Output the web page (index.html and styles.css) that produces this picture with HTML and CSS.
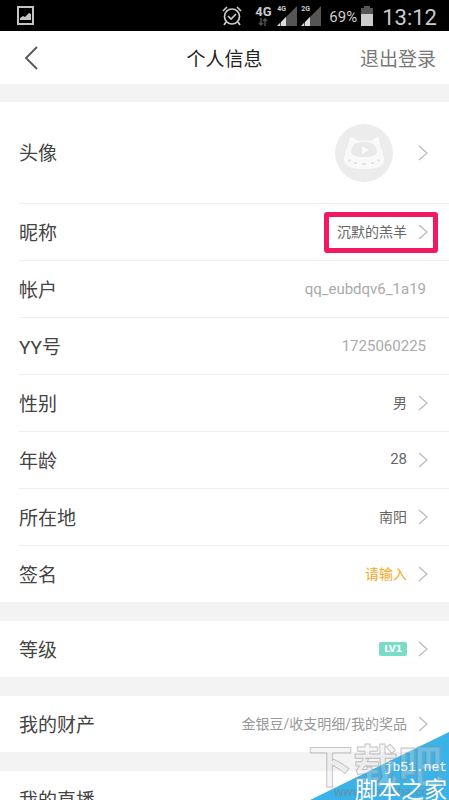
FILE: index.html
```html
<!DOCTYPE html>
<html lang="zh-CN">
<head>
<meta charset="utf-8">
<meta name="viewport" content="width=device-width, initial-scale=1">
<title>个人信息</title>
<link rel="stylesheet" href="styles.css">
</head>
<body>
<svg class="defs" aria-hidden="true">
  <symbol id="chevron" viewBox="0 0 10 16"><path d="M1 1l8 7-8 7" fill="none" stroke="currentColor" stroke-width="1.3"/></symbol>
  <symbol id="signal" viewBox="0 0 20 20"><path d="M0 20L20 0v20z" fill="#555"/><path d="M0 20l3-3v3zM4 20v-4l3-3v7zM7 20v-7l2-2v9z" fill="#ddd"/></symbol>
</svg>
<div class="screen">
  <div class="status">
    <svg class="status-photo" viewBox="0 0 17 19"><path d="M1 1h15v17H1z" fill="none" stroke="#c4c4c4" stroke-width="2"/><path d="M3 14V12l3-2 2 1 4-4 2 1v6z" fill="#c4c4c4"/></svg>
    <svg class="status-alarm" viewBox="0 0 20 20" fill="none" stroke="#ccc" stroke-width="1.7"><circle cx="10" cy="10.5" r="7.5"/><path d="M1 5l4-4M19 5l-4-4M4 16l-2 3M16 16l2 3M6 10l3 3 5-5"/></svg>
    <div class="net"><b>4G</b><svg viewBox="0 0 10 8"><path d="M3 0v7M1 5l2 2 2-2M7 8V1M5 3l2-2 2 2" fill="none" stroke="#555" stroke-width="1.4"/></svg></div>
    <div class="signal"><svg><use href="#signal"/></svg><b>4G</b></div>
    <div class="signal"><svg><use href="#signal"/></svg><b>2G</b></div>
    <span class="percent">69%</span>
    <svg class="battery" viewBox="0 0 12 20"><path d="M3 0h6v2h3v18H0V2h3z" fill="#555"/><path d="M0 8h12v12H0z" fill="#ccc"/></svg>
    <time class="clock">13:12</time>
  </div>
  <header class="header">
    <button class="back" type="button" aria-label="返回"><svg viewBox="0 0 14 24"><path d="M13 1L2 12l11 11" fill="none" stroke="#555" stroke-width="1.8"/></svg></button>
    <h1>个人信息</h1>
    <button class="logout" type="button">退出登录</button>
  </header>
  <main>
    <section class="group">
      <a class="row row-avatar" href="#avatar"><span class="label">头像</span>
        <svg class="avatar" viewBox="0 0 58 58"><circle cx="29" cy="29" r="29" fill="#ececec"/><path d="M15 14q1-2 4 0l4 3q6-1 13 0l4-3q3-2 4 0l1 8q3 4 3 9 2 4 0 9-3 5-19 5t-19-5q-2-5 0-9 0-5 3-9z" fill="#f9f9f9"/><path d="M16 27q1-9 13-9t13 9q0 6-13 6t-13-6z" fill="#e9e9e9"/><path d="M27 22l7 4-7 4z" fill="#fafafa"/><path d="M13 37l3-1M19 39h3M27 40h4M36 39h3M42 36l3 1" fill="none" stroke="#e4e4e4" stroke-width="2"/></svg>
        <svg class="chevron"><use href="#chevron"/></svg></a>
      <a class="row" href="#nickname"><span class="label">昵称</span><span class="value">沉默的羔羊</span><svg class="chevron"><use href="#chevron"/></svg><span class="highlight"></span></a>
      <div class="row"><span class="label">帐户</span><span class="value fixed">qq_eubdqv6_1a19</span></div>
      <div class="row"><span class="label">YY号</span><span class="value fixed">1725060225</span></div>
      <a class="row" href="#gender"><span class="label">性别</span><span class="value">男</span><svg class="chevron"><use href="#chevron"/></svg></a>
      <a class="row" href="#age"><span class="label">年龄</span><span class="value number">28</span><svg class="chevron"><use href="#chevron"/></svg></a>
      <a class="row" href="#location"><span class="label">所在地</span><span class="value">南阳</span><svg class="chevron"><use href="#chevron"/></svg></a>
      <a class="row" href="#signature"><span class="label">签名</span><span class="value prompt">请输入</span><svg class="chevron"><use href="#chevron"/></svg></a>
    </section>
    <section class="group">
      <a class="row" href="#level"><span class="label">等级</span><span class="level">LV1</span><svg class="chevron"><use href="#chevron"/></svg></a>
    </section>
    <section class="group">
      <a class="row" href="#assets"><span class="label">我的财产</span><span class="value muted">金银豆/收支明细/我的奖品</span><svg class="chevron"><use href="#chevron"/></svg></a>
    </section>
    <section class="group">
      <a class="row" href="#live"><span class="label">我的直播</span></a>
    </section>
  </main>
  <div class="corner">
    <svg class="triangle" viewBox="0 0 139 68"><path d="M0 68L139 0v68z" fill="#3cb3e8"/></svg>
    <span class="ghost">下载吧</span>
    <span class="ghost-url">www.xiazaiba.com</span>
    <div class="site"><span class="site-url">jb51.net</span><span class="site-name">脚本之家</span></div>
  </div>
</div>
</body>
</html>
```
FILE: styles.css
```css
* { box-sizing: border-box; }
body {
  margin: 0;
  background: #f3f3f3;
  color: #444;
  font-family: Roboto, "Noto Sans CJK SC", sans-serif;
}
.defs { position: absolute; width: 0; height: 0; }
.screen { position: relative; height: 100vh; overflow: hidden; }

.status {
  display: flex;
  align-items: center;
  height: 31px;
  padding: 0 12px 0 17px;
  background: #000;
  color: #ccc;
}
.status-photo { width: 17px; height: 19px; margin-right: auto; }
.status-alarm { width: 20px; height: 20px; margin-right: 12px; }
.net { display: flex; flex-direction: column; align-items: center; width: 18px; margin-right: 5px; }
.net b { font-size: 13px; line-height: 13px; }
.net svg { width: 10px; height: 8px; }
.signal { position: relative; width: 20px; height: 20px; margin-right: 4px; }
.signal svg { display: block; width: 20px; height: 20px; }
.signal b { position: absolute; top: 0; left: 0; font-size: 7px; line-height: 7px; }
.percent { margin: 3px 4px 0; font-size: 15px; }
.battery { width: 12px; height: 20px; margin-right: 9px; }
.clock { font-size: 22px; margin-top: 3px; }

.header {
  display: grid;
  grid-template-columns: 1fr auto 1fr;
  align-items: center;
  height: 53px;
  padding: 0 13px;
  margin-bottom: 18px;
  background: #fff;
}
.header h1 { margin: 0; color: #222; font-size: 19px; font-weight: 400; }
.header button { padding: 0; border: 0; background: none; font: inherit; }
.back { justify-self: start; }
.back svg { display: block; width: 14px; height: 24px; margin-left: 11px; }
.header .logout { justify-self: end; color: #777; font-size: 19px; }

.group { margin-bottom: 19px; padding-left: 19px; background: #fff; }
.row {
  position: relative;
  display: flex;
  align-items: center;
  height: 57px;
  padding-right: 21px;
  border-bottom: 1px solid #eee;
  color: inherit;
  text-decoration: none;
}
.row:last-child { height: 56px; border-bottom: 0; }
.row-avatar { height: 102px; }
.label { margin-right: auto; padding-bottom: 2px; font-size: 19px; }
.value { padding-bottom: 2px; color: #666; font-size: 14px; }
.number { font-size: 15px; }
.fixed { margin-right: 2px; padding: 0; color: #aaa; font-size: 15px; }
.muted { color: #999; }
.prompt { color: #f9a61c; }
.chevron { width: 10px; height: 16px; margin-left: 11px; color: #bbb; }
.avatar { width: 58px; height: 58px; margin-right: 14px; }
.highlight {
  position: absolute;
  top: 8px;
  right: 11px;
  width: 114px;
  height: 41px;
  border: 5px solid #f3185f;
  border-radius: 3px;
}
.level {
  padding: 0 5px;
  border-radius: 2px;
  background: #79dcc7;
  color: #fff;
  font: 700 9px/14px "DejaVu Sans", sans-serif;
}

.corner {
  position: absolute;
  right: 0;
  bottom: 0;
  width: 139px;
  height: 68px;
  pointer-events: none;
}
.triangle { position: absolute; inset: 0; width: 139px; height: 68px; }
.ghost {
  position: absolute;
  left: -2px;
  bottom: 8px;
  color: rgb(225 225 225 / 30%);
  font: 700 45px/56px "Noto Sans CJK SC", sans-serif;
  -webkit-text-stroke: 1px rgb(130 130 130 / 45%);
  white-space: nowrap;
}
.ghost-url {
  position: absolute;
  left: 24px;
  bottom: 0;
  color: rgb(120 120 120 / 45%);
  font: 700 12px/16px "Liberation Sans", sans-serif;
}
.site {
  position: absolute;
  right: 2px;
  bottom: 0;
  display: flex;
  flex-direction: column;
  align-items: flex-end;
  color: #fff;
}
.site-url { font: 13px/16px "Liberation Mono", monospace; }
.site-name { font: 400 23px/24px "Noto Sans CJK SC", sans-serif; }
```
